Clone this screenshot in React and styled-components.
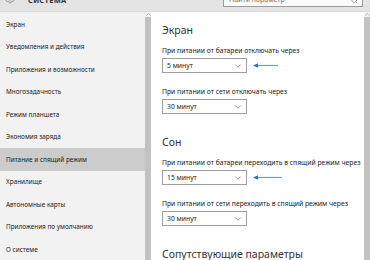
import React from "react";
import styled, { createGlobalStyle } from "styled-components";
import { Settings, Search } from "lucide-react";

const GlobalStyle = createGlobalStyle`
  html, body {
    margin: 0;
    padding: 0;
    width: 370px;
    height: 260px;
    overflow: hidden;
    background: #ffffff;
  }
  body {
    font-family: "Noto Sans", "Open Sans", sans-serif;
    color: #1a1a1a;
  }
`;

const menu = [
  "Экран",
  "Уведомления и действия",
  "Приложения и возможности",
  "Многозадачность",
  "Режим планшета",
  "Экономия заряда",
  "Питание и спящий режим",
  "Хранилище",
  "Автономные карты",
  "Приложения по умолчанию",
  "О системе",
];

const sections = [
  {
    title: "Экран",
    groups: [
      { label: "При питании от батареи отключать через", value: "5 минут", arrow: 25 },
      { label: "При питании от сети отключать через", value: "30 минут" },
    ],
  },
  {
    title: "Сон",
    groups: [
      {
        label: "При питании от батареи переходить в спящий режим через",
        value: "15 минут",
        arrow: 29,
      },
      { label: "При питании от сети переходить в спящий режим через", value: "30 минут" },
    ],
  },
  { title: "Сопутствующие параметры", groups: [] },
];

const Chevron = () => (
  <svg width="6" height="4" viewBox="0 0 6 4">
    <path d="M0.5 0.8 L3 3.2 L5.5 0.8" fill="none" stroke="#7a7a7a" strokeWidth="0.8" />
  </svg>
);

const BlueArrow = ({ width }) => (
  <svg width={width} height="5" viewBox={`0 0 ${width} 5`}>
    <line x1="3" y1="2.5" x2={width} y2="2.5" stroke="#4fa6ee" strokeWidth="1.2" />
    <path d="M0 2.5 L5 0.3 L5 4.7 Z" fill="#1479d6" />
  </svg>
);

const ScrollBar = () => (
  <Scroll>
    <ScrollArrow>
      <svg width="5" height="3" viewBox="0 0 5 3">
        <path d="M0.5 2.5 L2.5 0.5 L4.5 2.5" fill="none" stroke="#9a9a9a" strokeWidth="0.8" />
      </svg>
    </ScrollArrow>
    <Thumb />
  </Scroll>
);

const App = () => {
  return (
    <Window>
      <GlobalStyle />
      <Header>
        <Brand>
          <Settings size={10} color="#6a6a6a" strokeWidth={1.4} />
          <BrandTitle>СИСТЕМА</BrandTitle>
        </Brand>
        <SearchBox>
          <span>Найти параметр</span>
          <Search size={7} color="#555" strokeWidth={1.6} />
        </SearchBox>
      </Header>
      <Body>
        <Sidebar>
          {menu.map((item) => (
            <MenuItem key={item} $active={item === "Питание и спящий режим"}>
              {item}
            </MenuItem>
          ))}
        </Sidebar>
        <ScrollBar />
        <Content>
          {sections.map((section) => (
            <Section key={section.title}>
              <Heading>{section.title}</Heading>
              {section.groups.map((group) => (
                <Group key={group.label}>
                  <Label>{group.label}</Label>
                  <Row>
                    <Select>
                      <span>{group.value}</span>
                      <Chevron />
                    </Select>
                    {group.arrow && <BlueArrow width={group.arrow} />}
                  </Row>
                </Group>
              ))}
            </Section>
          ))}
        </Content>
        <ScrollBar />
      </Body>
    </Window>
  );
};

export default App;

const Window = styled.div`
  width: 370px;
  height: 260px;
  display: flex;
  flex-direction: column;
  overflow: hidden;
`;

const Header = styled.div`
  height: 12px;
  box-sizing: border-box;
  flex-shrink: 0;
  display: flex;
  align-items: flex-end;
  padding: 0 7px 4px 5px;
  background: #e4e4e4;
  border-bottom: 1px solid #d9d9d9;
  overflow: hidden;
`;

const Brand = styled.div`
  display: flex;
  align-items: flex-end;
  gap: 13px;
  margin-bottom: 3px;
`;

const BrandTitle = styled.span`
  font-size: 7.5px;
  line-height: 8px;
  font-weight: 700;
  letter-spacing: 0.3px;
  color: #333;
`;

const SearchBox = styled.div`
  margin-left: auto;
  width: 140px;
  height: 18px;
  box-sizing: border-box;
  border: 1px solid #9c9c9c;
  background: #fbfbfb;
  display: flex;
  align-items: flex-end;
  justify-content: space-between;
  padding: 0 4px 2px 5px;
  font-size: 7px;
  line-height: 9px;
  color: #6d6d6d;
`;

const Body = styled.div`
  flex: 1;
  display: flex;
  min-height: 0;
`;

const Sidebar = styled.div`
  width: 145px;
  flex-shrink: 0;
  background: #f2f2f2;
  padding-top: 1px;
`;

const MenuItem = styled.div`
  height: 22.5px;
  display: flex;
  align-items: center;
  padding-left: 6px;
  font-size: 6.4px;
  color: #1a1a1a;
  background: ${({ $active }) => ($active ? "#cccccc" : "transparent")};
`;

const Scroll = styled.div`
  width: 6px;
  flex-shrink: 0;
  display: flex;
  flex-direction: column;
  background: #f2f2f2;
`;

const ScrollArrow = styled.div`
  height: 5px;
  display: flex;
  align-items: center;
  justify-content: center;
`;

const Thumb = styled.div`
  flex: 1;
  background: #c2c2c2;
`;

const Content = styled.div`
  flex: 1;
  background: #ffffff;
  padding: 12px 0 0 11px;
  display: flex;
  flex-direction: column;
  gap: 22px;
`;

const Section = styled.div`
  display: flex;
  flex-direction: column;
  gap: 14px;
`;

const Heading = styled.div`
  font-size: 10.5px;
  line-height: 13px;
  font-weight: 400;
  color: #333;
  margin-bottom: -5px;
`;

const Group = styled.div`
  display: flex;
  flex-direction: column;
  gap: 2px;
`;

const Label = styled.div`
  font-size: 6.8px;
  line-height: 10px;
  color: #1a1a1a;
  white-space: nowrap;
`;

const Row = styled.div`
  display: flex;
  align-items: center;
  gap: 6px;
`;

const Select = styled.div`
  width: 85px;
  height: 15px;
  box-sizing: border-box;
  border: 1px solid #9e9e9e;
  display: flex;
  align-items: center;
  justify-content: space-between;
  padding: 0 5px 0 4px;
  font-size: 6.8px;
  color: #1a1a1a;
`;
